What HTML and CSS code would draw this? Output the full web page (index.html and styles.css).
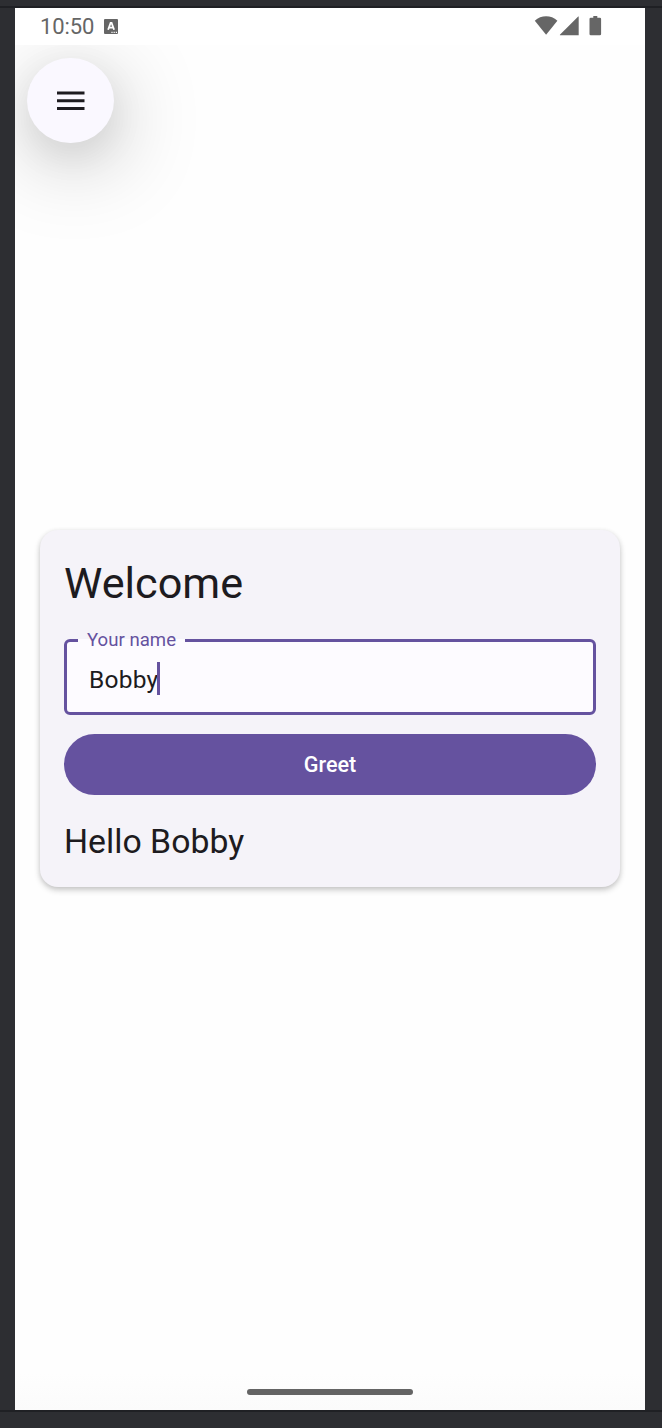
FILE: index.html
```
<!DOCTYPE html>
<html lang="en">
<head>
<meta charset="utf-8">
<title>Welcome</title>
<link rel="stylesheet" href="styles.css">
</head>
<body>
<div class="device">
  <div class="screen">
    <header class="status-bar">
      <span class="clock">10:50</span>
      <svg class="keyboard-icon" width="14" height="15" viewBox="0 0 14 15">
        <rect width="14" height="15" rx="1" fill="#666"/>
        <path d="M4.1 10.8 6.6 4h1l2.5 6.8M5 8.7h4.2" fill="none" stroke="#fff" stroke-width="1.8"/>
        <path d="M7.4 13.4h1.2M9.6 13.4h1.2M11.8 13.4H13" stroke="#fff" stroke-width="1.1"/>
      </svg>
      <svg class="status-icons" width="68" height="20" viewBox="0 0 68 20" fill="#666">
        <path d="M.8 4.7C7.2-1.2 17-1.2 23.4 4.7L12.1 18.8Z"/>
        <path d="M25.9 19.3V18.8L44.2.5H44.7V19.3Z"/>
        <path d="M56.8 1.7H59.3V0h4v1.7h2.5q1.3 0 1.3 1.3v15q0 1.3-1.3 1.3h-9q-1.3 0-1.3-1.3V3q0-1.3 1.3-1.3Z"/>
      </svg>
    </header>
    <main class="content">
      <button class="menu-button" aria-label="Menu">
        <svg width="28" height="20" viewBox="0 0 28 20" fill="#1d1b20">
          <path d="M0 .4h27.5v3H0zM0 8.2h27.5v3H0zM0 16h27.5v3H0z"/>
        </svg>
      </button>
      <section class="card">
        <h1 class="title">Welcome</h1>
        <div class="field">
          <label class="field-label"><span class="label-text">Your name</span></label>
          <span class="field-value">Bobby</span><span class="caret"></span>
        </div>
        <button class="greet"><span>Greet</span></button>
        <p class="greeting">Hello Bobby</p>
      </section>
    </main>
    <footer class="nav-bar"><div class="handle"></div></footer>
  </div>
</div>
</body>
</html>
```
FILE: styles.css
```
* { box-sizing: border-box; }
body {
  margin: 0;
  background: #2d2e32;
  font-family: Roboto, sans-serif;
  color: #1d1b20;
}
.device {
  height: 1428px;
  padding: 6px 0 16px;
}
.screen {
  display: flex;
  flex-direction: column;
  height: 1406px;
  border-top: 2px solid #1f2024;
  border-bottom: 2px solid #1f2024;
  background: linear-gradient(90deg, #2d2e32 15px, #fefefe 15px, #fefefe 645px, #2d2e32 645px);
  padding: 0 17px 0 15px;
}
.status-bar {
  display: flex;
  align-items: flex-start;
  height: 37px;
  padding: 7px 43px 0 25px;
  background: #fff;
}
.clock {
  font-size: 22px;
  line-height: 24px;
  letter-spacing: -.1px;
  color: #666;
  width: 55px;
  white-space: nowrap;
}
.keyboard-icon { margin: 4px 0 0 9px; }
.status-icons { margin: 1px 0 0 auto; }
.content {
  flex: 1;
  overflow: hidden;
  padding: 12.5px 24px 0;
}
.menu-button {
  display: flex;
  align-items: center;
  justify-content: center;
  width: 86.5px;
  height: 85.5px;
  margin: 0 0 387px -12px;
  padding: 1.5px 0 0 1px;
  border: 0;
  border-radius: 50%;
  background: #faf8ff;
  box-shadow: 0 12px 36px rgba(0, 0, 0, .07), 4px 18px 84px rgba(0, 0, 0, .26);
}
.card {
  width: 580.6px;
  height: 357px;
  margin-left: .7px;
  padding: 26px 24px 0 24.3px;
  border-radius: 18px;
  background: #f5f3f9;
  box-shadow: 0 3px 6px rgba(0, 0, 0, .2), 0 1px 5px rgba(0, 0, 0, .07);
}
.title {
  margin: 0 0 28px;
  font-size: 43.2px;
  line-height: 55px;
  font-weight: 400;
}
.field {
  position: relative;
  display: flex;
  align-items: center;
  width: 532px;
  height: 76px;
  margin-bottom: 18.5px;
  padding: 5px 0 0 22px;
  border: 3px solid #65529f;
  border-radius: 6px;
  background: #fdfbff;
}
.field-label {
  position: absolute;
  left: 11px;
  top: -13px;
  width: 107px;
  height: 22px;
  padding-left: 9px;
  background: linear-gradient(#f5f3f9 10px, #fdfbff 10px);
  color: #65529f;
  font-size: 18.6px;
  line-height: 22px;
  letter-spacing: .02px;
  white-space: nowrap;
}
.field-value {
  font-size: 24.5px;
  letter-spacing: .25px;
}
.caret {
  width: 3px;
  height: 33px;
  margin-top: -3px;
  margin-left: -1px;
  background: #65529f;
}
.greet {
  display: block;
  width: 532px;
  height: 61.5px;
  margin: 0 0 23px;
  padding: 0;
  border: 0;
  border-radius: 31px;
  background: #65529f;
  color: #fff;
  font: 500 21.6px Roboto, sans-serif;
}
.greeting {
  margin: 0;
  font-size: 33.8px;
  line-height: 47px;
}
.nav-bar {
  height: 37px;
  padding-top: 16px;
  background: linear-gradient(#fefefe, #fbfbfb);
}
.handle {
  width: 166px;
  height: 6px;
  margin: 0 auto;
  border-radius: 3px;
  background: #646464;
}
```
